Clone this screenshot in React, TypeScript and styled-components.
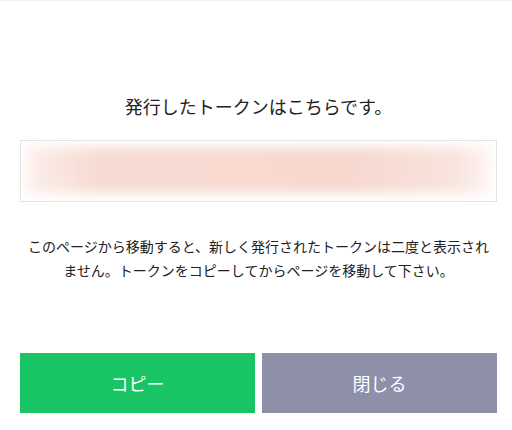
import styled, { createGlobalStyle } from "styled-components";

const GlobalStyle = createGlobalStyle`
  html, body {
    margin: 0;
    padding: 0;
    background: #ffffff;
  }
  body {
    font-family: "Noto Sans CJK JP", "Noto Sans", sans-serif;
    color: #222222;
  }
`;

const Page = styled.div`
  border-top: 1px solid #f0f0f0;
  width: 512px;
  height: 429px;
  box-sizing: border-box;
  padding: 93px 15px 0 20px;
`;

const Title = styled.h2`
  margin: 0;
  font-size: 18px;
  font-weight: 400;
  line-height: 24px;
  text-align: center;
  color: #222222;
`;

const TokenBox = styled.div`
  margin-top: 22px;
  height: 62px;
  box-sizing: border-box;
  border: 1px solid #e4e4e4;
  padding: 6px 6px 8px;
  overflow: hidden;
`;

const TokenBlur = styled.div`
  height: 100%;
  background: linear-gradient(
    90deg,
    #fcefeb 0%,
    #f7dbd2 15%,
    #f7d9d0 45%,
    #f6d8cf 70%,
    #f9e3dd 92%,
    #fdf3f0 100%
  );
  filter: blur(6px);
`;

const Notice = styled.p`
  margin: 32px 0 0;
  font-size: 14px;
  line-height: 24px;
  text-align: center;
  color: #222222;
`;

const ButtonRow = styled.div`
  margin-top: 71px;
  display: grid;
  grid-template-columns: 1fr 1fr;
  gap: 7px;
`;

const ActionButton = styled.button<{ $tone: "primary" | "muted" }>`
  height: 60px;
  border: none;
  border-radius: 0;
  padding: 0;
  font-family: inherit;
  font-size: 18px;
  color: #ffffff;
  background: ${(p) => (p.$tone === "primary" ? "#19c464" : "#8e90aa")};
  cursor: pointer;
`;

const App = () => {
  return (
    <>
      <GlobalStyle />
      <Page>
        <Title>発行したトークンはこちらです。</Title>
        <TokenBox>
          <TokenBlur />
        </TokenBox>
        <Notice>
          このページから移動すると、新しく発行されたトークンは二度と表示され
          <br />
          ません。トークンをコピーしてからページを移動して下さい。
        </Notice>
        <ButtonRow>
          <ActionButton $tone="primary">コピー</ActionButton>
          <ActionButton $tone="muted">閉じる</ActionButton>
        </ButtonRow>
      </Page>
    </>
  );
};

export default App;
